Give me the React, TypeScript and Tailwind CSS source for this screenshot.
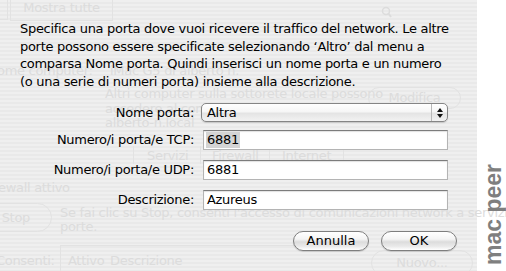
import React from "react";

const font = "font-['Lucida_Grande','DejaVu_Sans',sans-serif]";

function Ghost() {
  const g = "absolute whitespace-nowrap text-[#dcdcdc] text-[13px] leading-[15px]";
  return (
    <div className={`absolute inset-0 ${font} tracking-[-0.3px]`}>
      <div className="absolute left-[-8px] top-[-4px] w-[16px] h-[24px] border border-[#e2e2e2]" />
      <div className="absolute left-[10px] top-[-4px] w-[103px] h-[25px] border border-[#e2e2e2] flex items-end justify-center pb-[3px] text-[#dcdcdc] text-[13px]">Mostra tutte</div>
      <svg className="absolute left-[381px] top-[6px]" width="12" height="14" viewBox="0 0 12 14">
        <circle cx="5" cy="5" r="3.5" fill="none" stroke="#dcdcdc" strokeWidth="1.5" />
        <line x1="7.5" y1="7.5" x2="10" y2="11" stroke="#dcdcdc" strokeWidth="2" />
      </svg>
      <div className={`${g} left-[-3px] top-[63px]`}>ome computer:</div>
      <div className={`${g} left-[110px] top-[63px]`}>iMac G5 di alberto n.</div>
      <div className={`${g} left-[105px] top-[86px]`}>Altri computer sulla sottorete locale possono</div>
      <div className={`${g} left-[105px] top-[101px]`}>accedere al computer a</div>
      <div className={`${g} left-[105px] top-[115px]`}>alberto-n.local</div>
      <div className="absolute left-[368px] top-[87px] w-[93px] h-[22px] rounded-full border border-[#e2e2e2] flex items-center justify-center text-[#dcdcdc] text-[13px]">Modifica</div>
      <div className="absolute left-[133px] top-[146px] w-[211px] h-[18px] border-x border-[#e2e2e2]" />
      <div className="absolute left-[200px] top-[146px] w-[70px] h-[18px] border-x border-[#e2e2e2]" />
      <div className={`${g} left-[147px] top-[148px]`}>Servizi</div>
      <div className={`${g} left-[212px] top-[148px]`}>Firewall</div>
      <div className={`${g} left-[282px] top-[148px]`}>Internet</div>
      <div className={`${g} left-[-2px] top-[180px]`}>ewall attivo</div>
      <div className="absolute left-[-30px] top-[203px] w-[82px] h-[29px] rounded-full border border-[#e2e2e2] flex items-center justify-end pr-[21px] text-[#dcdcdc] text-[13px]">Stop</div>
      <div className={`${g} left-[60px] top-[205px]`}>Se fai clic su Stop, consenti l'accesso di comunicazioni network a servizi e</div>
      <div className={`${g} left-[60px] top-[219px]`}>porte.</div>
      <div className={`${g} left-[-4px] top-[253px]`}>Consenti:</div>
      <div className="absolute left-[60px] top-[245px] w-[300px] h-[30px] border-l border-t border-[#e2e2e2]" />
      <div className={`${g} left-[68px] top-[253px]`}>Attivo</div>
      <div className={`${g} left-[110px] top-[253px]`}>Descrizione</div>
      <div className="absolute left-[371px] top-[250px] w-[102px] h-[26px] rounded-full border border-[#e2e2e2] flex items-center justify-center text-[#dcdcdc] text-[13px]">Nuovo...</div>
    </div>
  );
}

function TextField({ children }: { children: React.ReactNode }) {
  return (
    <div className="ml-[9px] w-[245px] h-[20px] bg-white border border-[#b4b4b4] border-t-[#7c7c7c] shadow-[inset_0_1px_1px_rgba(0,0,0,0.12)] flex items-center pl-[2px] text-[13px] text-black">
      {children}
    </div>
  );
}

function Row({ label, children }: { label: string; children: React.ReactNode }) {
  return (
    <div className="flex items-center">
      <div className="w-[174px] text-right text-[13px] text-black leading-[16px]">{label}</div>
      {children}
    </div>
  );
}

function AquaButton({ children }: { children: React.ReactNode }) {
  return (
    <div className="w-[76px] h-[20px] rounded-full border border-[#7e7e7e] bg-[linear-gradient(to_bottom,#ffffff_0%,#f4f4f4_40%,#dcdcdc_55%,#eaeaea_80%,#ffffff_100%)] shadow-[0_1px_1px_rgba(0,0,0,0.15)] flex items-center justify-center text-[13px] text-black">
      {children}
    </div>
  );
}

export default function App() {
  return (
    <div className={`w-[506px] h-[271px] flex overflow-hidden ${font}`}>
      <div className="relative w-[477px] h-full bg-[repeating-linear-gradient(to_bottom,#efefef_0px,#efefef_2px,#e9e9e9_2px,#e9e9e9_4px)]">
        <Ghost />
        <div className="relative pt-[20px] pl-[20px] pr-[20px] tracking-[-0.3px]">
          <p className="text-[13px] leading-[17.5px] text-black whitespace-nowrap">
            Specifica una porta dove vuoi ricevere il traffico del network. Le altre
            <br />
            porte possono essere specificate selezionando ‘Altro’ dal menu a
            <br />
            comparsa Nome porta. Quindi inserisci un nome porta e un numero
            <br />
            (o una serie di numeri porta) insieme alla descrizione.
          </p>
          <div className="mt-[13px] flex flex-col">
            <Row label="Nome porta:">
              <div className="ml-[7px] w-[247px] h-[19px] rounded-[5px] border border-[#858585] bg-[linear-gradient(to_bottom,#ffffff_0%,#f6f6f6_45%,#e4e4e4_55%,#f2f2f2_100%)] shadow-[0_1px_1px_rgba(0,0,0,0.15)] flex items-center text-[13px] text-black">
                <span className="flex-1 pl-[5px]">Altra</span>
                <div className="w-[16px] h-full border-l border-[#b8b8b8] flex flex-col items-center justify-center gap-[2px]">
                  <svg width="6" height="4" viewBox="0 0 6 4"><path d="M3 0 L6 4 L0 4 Z" fill="#111" /></svg>
                  <svg width="6" height="4" viewBox="0 0 6 4"><path d="M0 0 L6 0 L3 4 Z" fill="#111" /></svg>
                </div>
              </div>
            </Row>
            <div className="mt-[8px]">
              <Row label="Numero/i porta/e TCP:">
                <TextField>
                  <span className="bg-[#d4d4d4] px-[1px] leading-[16px]">6881</span>
                </TextField>
              </Row>
            </div>
            <div className="mt-[10px]">
              <Row label="Numero/i porta/e UDP:">
                <TextField><span className="pl-[1px]">6881</span></TextField>
              </Row>
            </div>
            <div className="mt-[10px]">
              <Row label="Descrizione:">
                <TextField><span className="pl-[1px]">Azureus</span></TextField>
              </Row>
            </div>
          </div>
          <div className="mt-[21px] flex justify-end gap-[12px] tracking-normal">
            <AquaButton>Annulla</AquaButton>
            <AquaButton>OK</AquaButton>
          </div>
        </div>
      </div>
      <div className="flex-1 h-full bg-white flex flex-col justify-end items-start pl-[5px] pb-[6px]">
        <span className="[writing-mode:vertical-rl] rotate-180 font-['Liberation_Sans',Arial,sans-serif] font-bold text-[23px] leading-[23px] text-[#7f7f7f]">
          mac peer
        </span>
      </div>
    </div>
  );
}
